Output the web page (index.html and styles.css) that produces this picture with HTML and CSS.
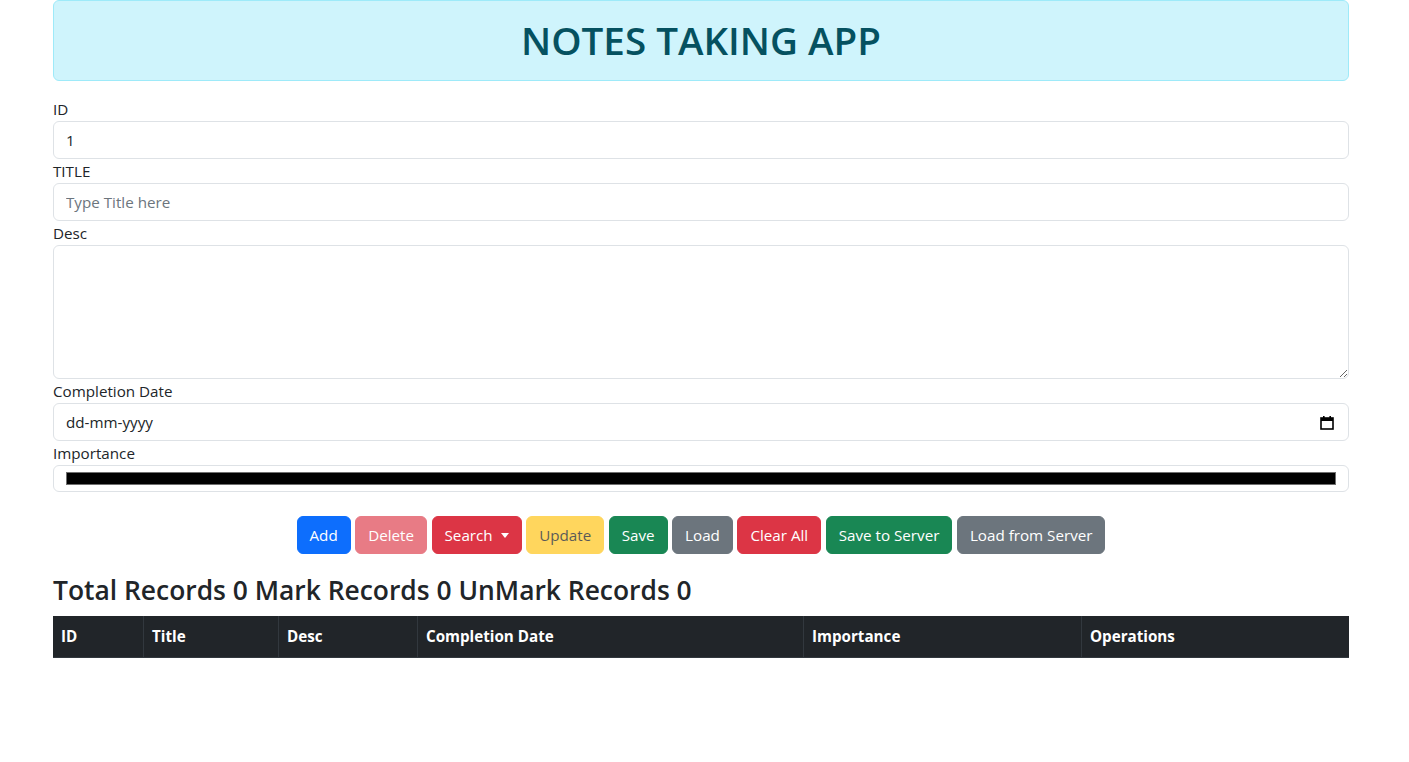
FILE: index.html
```html
<!DOCTYPE html>
<html lang="en">
<head>
<meta charset="utf-8">
<title>Notes Taking App</title>
<link rel="stylesheet" href="styles.css">
</head>
<body>
<div class="container">
  <div class="alert">
    <h1 class="app-title">NOTES TAKING APP</h1>
  </div>

  <form class="note-form">
    <label class="form-label" for="id">ID</label>
    <input class="form-control" id="id" type="text" value="1">

    <label class="form-label" for="title">TITLE</label>
    <input class="form-control" id="title" type="text" placeholder="Type Title here">

    <label class="form-label" for="desc">Desc</label>
    <textarea class="form-control textarea" id="desc" rows="5"></textarea>

    <label class="form-label">Completion Date</label>
    <div class="form-control date-control">
      <span class="date-text">dd-mm-yyyy</span>
      <svg class="cal-icon" width="14" height="15" viewBox="0 0 14 15">
        <rect x="1" y="3" width="12" height="11" fill="none" stroke="#000" stroke-width="1.6"/>
        <rect x="1" y="3" width="12" height="3" fill="#000"/>
        <rect x="3" y="1" width="1.6" height="3" fill="#000"/>
        <rect x="9.4" y="1" width="1.6" height="3" fill="#000"/>
      </svg>
    </div>

    <label class="form-label">Importance</label>
    <div class="form-control range-control">
      <div class="range-track"></div>
    </div>
  </form>

  <div class="actions">
    <button class="btn btn-primary" type="button">Add</button>
    <button class="btn btn-danger disabled" type="button">Delete</button>
    <button class="btn btn-danger dropdown-toggle" type="button">Search</button>
    <button class="btn btn-warning disabled" type="button">Update</button>
    <button class="btn btn-success" type="button">Save</button>
    <button class="btn btn-secondary" type="button">Load</button>
    <button class="btn btn-danger" type="button">Clear All</button>
    <button class="btn btn-success" type="button">Save to Server</button>
    <button class="btn btn-secondary" type="button">Load from Server</button>
  </div>

  <h3 class="records">Total Records 0 Mark Records 0 UnMark Records 0</h3>

  <table class="table">
    <thead>
      <tr>
        <th class="c-id">ID</th>
        <th class="c-title">Title</th>
        <th class="c-desc">Desc</th>
        <th class="c-date">Completion Date</th>
        <th class="c-imp">Importance</th>
        <th class="c-ops">Operations</th>
      </tr>
    </thead>
    <tbody></tbody>
  </table>
</div>
</body>
</html>
```

FILE: styles.css
```css
* { box-sizing: border-box; }

body {
  margin: 0;
  background: #fff;
  color: #212529;
  font-family: "Open Sans", "Noto Sans", "Liberation Sans", sans-serif;
  font-size: 15.2px;
  line-height: 24px;
}

.container {
  width: 1296px;
  margin-left: 53px;
}

.alert {
  margin-bottom: 16px;
  padding: 16px;
  background: #cff4fc;
  border: 1px solid #9eeaf9;
  border-radius: 6px;
  color: #055160;
  text-align: center;
}

.app-title {
  margin: 0;
  font-size: 38.6px;
  line-height: 47px;
  font-weight: 600;
}

.note-form { display: flex; flex-direction: column; }

.form-label {
  display: block;
  line-height: 24px;
  font-size: 15.2px;
}

.form-control {
  display: block;
  width: 100%;
  height: 38px;
  padding: 6px 12px;
  font-family: inherit;
  font-size: 15.2px;
  line-height: 24px;
  color: #212529;
  background: #fff;
  border: 1px solid #dee2e6;
  border-radius: 6px;
  outline: none;
}

.form-control::placeholder { color: #6c757d; }

.textarea { height: 134px; resize: vertical; }

.date-control {
  display: flex;
  align-items: center;
  justify-content: space-between;
}

.cal-icon { margin-right: 2px; }

.range-control {
  height: 27px;
  padding: 6px 12px;
}

.range-track {
  height: 13px;
  background: #000;
  border: 1px solid #6f6f6f;
}

.actions {
  display: flex;
  justify-content: center;
  gap: 4.5px;
  margin-top: 24px;
}

.btn {
  display: inline-flex;
  align-items: center;
  height: 38px;
  padding: 6px 12px;
  font-family: inherit;
  font-size: 15.2px;
  line-height: 24px;
  border: 1px solid transparent;
  border-radius: 6px;
  color: #fff;
  cursor: pointer;
}

.btn-primary { background: #0d6efd; border-color: #0d6efd; }
.btn-danger { background: #dc3545; border-color: #dc3545; }
.btn-success { background: #198754; border-color: #198754; }
.btn-secondary { background: #6c757d; border-color: #6c757d; }
.btn-warning { background: #ffc107; border-color: #ffc107; color: #000; }
.btn.disabled { opacity: 0.65; }

.dropdown-toggle::after {
  content: "";
  display: inline-block;
  margin-left: 8px;
  border-top: 5px solid #fff;
  border-left: 4.5px solid transparent;
  border-right: 4.5px solid transparent;
}

.records {
  margin: 20px 0 8px;
  font-size: 26.4px;
  line-height: 33.6px;
  font-weight: 600;
}

.table {
  width: 1296px;
  border-collapse: separate;
  border-spacing: 0;
  table-layout: fixed;
}

.table th {
  height: 42px;
  padding: 8px;
  background: #212529;
  color: #fff;
  text-align: left;
  font-weight: 700;
  font-size: 15.2px;
  line-height: 24px;
  border-bottom: 1px solid #32383e;
  border-left: 1px solid #32383e;
}

.table th:first-child { border-left: none; }

.c-id { width: 90px; }
.c-title { width: 135px; }
.c-desc { width: 139px; }
.c-date { width: 386px; }
.c-imp { width: 278px; }
.c-ops { width: 268px; }
```
